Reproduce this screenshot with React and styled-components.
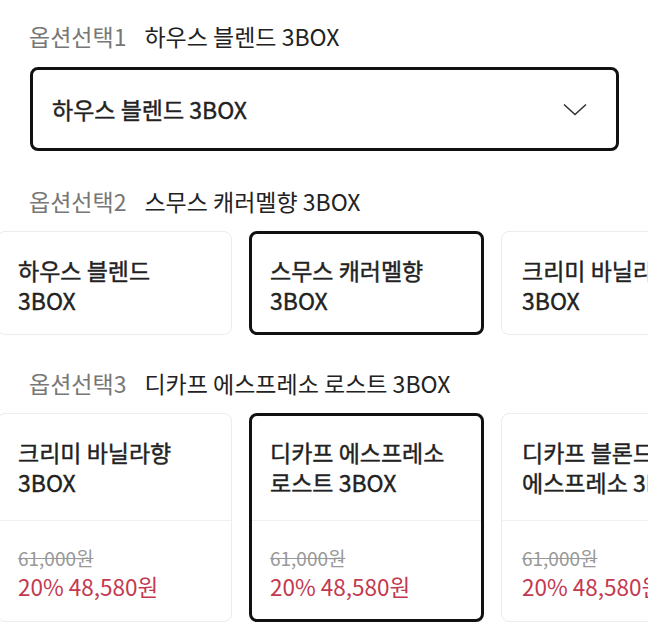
import styled, { createGlobalStyle } from "styled-components"

const GlobalStyle = createGlobalStyle`
  * { box-sizing: border-box; }
  body {
    margin: 0;
    background: #fff;
    font-family: "Noto Sans CJK KR", "Noto Sans", sans-serif;
    color: #222;
  }
`

const Page = styled.div`
  width: 648px;
  height: 634px;
  overflow: hidden;
  padding-top: 21px;
`

const Group = styled.section`
  display: flex;
  flex-direction: column;
  gap: ${p => p.$gap || 15}px;
  margin-bottom: ${p => p.$after || 0}px;
`

const Label = styled.div`
  display: flex;
  align-items: center;
  height: 30px;
  padding-left: 29px;
  gap: 18px;
  white-space: nowrap;
`

const LabelName = styled.span`
  font-size: 23px;
  color: #777;
`

const LabelValue = styled.span`
  font-size: 23px;
  color: #222;
`

const Select = styled.div`
  margin: 0 29px 0 30px;
  height: 84px;
  border: 3px solid #111;
  border-radius: 8px;
  display: flex;
  align-items: center;
  justify-content: space-between;
  padding: 0 29px 0 19px;
  font-size: 23px;
  -webkit-text-stroke: 0.4px #222;
  color: #222;
`

const Track = styled.div`
  display: flex;
  gap: 17px;
  transform: translateX(-3px);
`

const Card = styled.div`
  --pad: ${p => (p.$selected ? 18 : 20)}px;
  --top: ${p => (p.$selected ? 21 : 23)}px;
  flex: 0 0 235px;
  border: ${p => (p.$selected ? "3px solid #111" : "1px solid #ececec")};
  border-radius: 8px;
  background: #fff;
  display: flex;
  flex-direction: column;
`

const CardTitle = styled.div`
  padding: var(--top) var(--pad) ${p => p.$bottom}px;
  font-size: 23px;
  line-height: 30px;
  color: #222;
  -webkit-text-stroke: 0.4px #222;
  white-space: nowrap;
`

const TitleLine = styled.div``

const PriceBox = styled.div`
  border-top: 1px solid #f0f0f0;
  padding: 24px var(--pad) var(--pad);
  display: flex;
  flex-direction: column;
  white-space: nowrap;
`

const OldPrice = styled.span`
  font-size: 19px;
  line-height: 26px;
  color: #999;
  text-decoration: line-through;
`

const SalePrice = styled.span`
  font-size: 22.5px;
  line-height: 30px;
  color: #c3394f;
`

const Chevron = () => (
  <svg width="24" height="13" viewBox="0 0 24 13" fill="none">
    <polyline points="1,1.5 12,11.5 23,1.5" stroke="#333" strokeWidth="1.6" />
  </svg>
)

const blends = [
  { lines: ["하우스 블렌드", "3BOX"] },
  { lines: ["스무스 캐러멜향", "3BOX"], selected: true },
  { lines: ["크리미 바닐라향", "3BOX"] },
]

const decaf = [
  { lines: ["크리미 바닐라향", "3BOX"] },
  { lines: ["디카프 에스프레소", "로스트 3BOX"], selected: true },
  { lines: ["디카프 블론드", "에스프레소 3BOX"] },
]

const Title = ({ lines, bottom }) => (
  <CardTitle $bottom={bottom}>
    {lines.map(l => (
      <TitleLine key={l}>{l}</TitleLine>
    ))}
  </CardTitle>
)

export default function App() {
  return (
    <Page>
      <GlobalStyle />
      <Group $gap={16} $after={35}>
        <Label>
          <LabelName>옵션선택1</LabelName>
          <LabelValue>하우스 블렌드 3BOX</LabelValue>
        </Label>
        <Select>
          하우스 블렌드 3BOX
          <Chevron />
        </Select>
      </Group>

      <Group $after={33}>
        <Label>
          <LabelName>옵션선택2</LabelName>
          <LabelValue>스무스 캐러멜향 3BOX</LabelValue>
        </Label>
        <Track>
          {blends.map(b => (
            <Card key={b.lines[0]} $selected={b.selected}>
              <Title lines={b.lines} bottom={b.selected ? 17 : 19} />
            </Card>
          ))}
        </Track>
      </Group>

      <Group>
        <Label>
          <LabelName>옵션선택3</LabelName>
          <LabelValue>디카프 에스프레소 로스트 3BOX</LabelValue>
        </Label>
        <Track>
          {decaf.map(d => (
            <Card key={d.lines[0]} $selected={d.selected}>
              <Title lines={d.lines} bottom={23} />
              <PriceBox>
                <OldPrice>61,000원</OldPrice>
                <SalePrice>20% 48,580원</SalePrice>
              </PriceBox>
            </Card>
          ))}
        </Track>
      </Group>
    </Page>
  )
}
